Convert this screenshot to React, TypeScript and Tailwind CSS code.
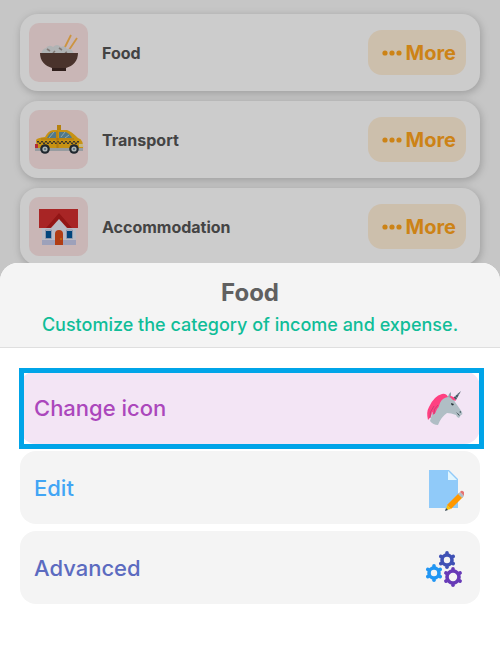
import type { ReactNode } from "react";

function RiceIcon() {
  return (
    <svg viewBox="0 0 48 48" className="size-12" aria-hidden="true">
      <path d="M29 20 36 6M34 21 42 9" stroke="#ffb951" strokeWidth="1.8" />
      <path d="M6 25q1-5 5-6 3-4 7-1 4-4 8 0 4-2 6 2 5-1 7 5Z" fill="#dce0e2" />
      <path d="m12 20 3 2m3 2 2-2m4-3 3 2m3 3 2-1" stroke="#a19792" strokeWidth="1.6" />
      <path d="M5 24h38c0 8-5 13-12 15H17C10 37 5 32 5 24Z" fill="#5d4037" />
      <path d="M17 39h14v3H17Z" fill="#3e2723" />
    </svg>
  );
}

function TaxiIcon() {
  const checks = Array.from({ length: 21 }, (_, i) => i);
  return (
    <svg viewBox="0 0 52 40" className="h-10 w-[52px]" aria-hidden="true">
      <path d="M24 5h4v6h-4Z" fill="#e4a212" />
      <path d="M3 20q1-2 9-3 3-6 8-7h14q4 1 11 8 6 1 5 13H4Z" fill="#f9b719" />
      <path d="M14 18q3-6 6-6h3v6ZM26 12h7q5 3 6 6H26Z" fill="#6598ac" />
      <path d="m16 18 5-6m7 5 4-5m0 6 4-3" stroke="#b5d1d8" />
      <path d="M2 28h48v3H2Z" fill="#bec4c8" />
      <path d="M2 24h3v4H2Z" fill="#df3546" />
      <path d="M46 24h4v3h-4Z" fill="#f5e6a4" />
      {checks.map((i) => (
        <path key={i} d={`M${4 + i * 2} ${i % 2 ? 22.5 : 21}h2v1.5h-2Z`} fill="#4a4437" />
      ))}
      <path d="M24 11v17m1-10v10M8 19h33" stroke="#d28b12" strokeWidth=".7" />
      {[12, 41].map((x) => (
        <g key={x}>
          <circle cx={x} cy="29" r="4.8" fill="#28313a" />
          <circle cx={x} cy="29" r="2.6" fill="#d7e0e2" />
          <circle cx={x} cy="29" r="1" fill="#668694" />
        </g>
      ))}
    </svg>
  );
}

function HouseIcon() {
  return (
    <svg viewBox="0 0 48 48" className="size-12" aria-hidden="true">
      <path d="M7 22h34v20H7Z" fill="#e8eaf6" />
      <path d="M7 37h34v5H7Z" fill="#c5cae9" />
      <path d="M4 6h39v19H4Z" fill="#d32f2f" />
      <path d="m24 10 13 15h-4l-9-8-9 8h-4Z" fill="#b71c1c" />
      <path d="m24 16 8 9v12H16V25Z" fill="#e8eaf6" />
      <path d="M20 42V31q0-4 4-4t4 4v11Z" fill="#dc4d19" />
      <path d="M11 28h5v7h-5Zm21 0h5v7h-5Z" fill="#01579b" />
      <path d="M10.500 27h6v8.500h-6Zm21 0h6v8.500h-6Z" fill="none" stroke="#b2bdd7" />
      <circle cx="26" cy="36" r=".8" fill="#ffb300" />
    </svg>
  );
}

function UnicornIcon() {
  return (
    <svg viewBox="0 0 40 40" className="size-10" aria-hidden="true">
      <path d="m29 9 8-7-5 9Z" fill="#455a64" />
      <path d="m31 7 2 2m0-4 2 1" stroke="#90a4ae" strokeWidth=".7" />
      <path d="M18 9q4-3 8-1 4 1 5 5l7 10q1 3-1 3l-2 3q-2 0-3-3-5-2-9-2-6 4-9 12-5 0-8-4L10 18Z" fill="#b0bec5" />
      <path d="M24 8q0-3 3-5v6Z" fill="#90a4ae" />
      <path d="M26 7q4 0 6 5-4-1-6-4ZM24 8q-6 1-8 6-1 4-3 6-1 4-4 6 0-3-1-3 0 4-4 8-2-8 1-13Q10 7 18 5q4-1 6 3Z" fill="#ff4081" />
      <path d="M6 29q-1-6 4-12m0 8q-1-5 4-9" fill="none" stroke="#c93f75" />
      <path d="m27 14 3 1-1 1.500q-2 0-2-2.500m5 9q3 2 4 4-2-1-4-4Z" fill="#263238" />
      <path d="M36 22q1 1 0 2" fill="none" stroke="#455a64" />
    </svg>
  );
}

function EditIcon() {
  return (
    <svg viewBox="0 0 40 44" className="h-11 w-10" aria-hidden="true">
      <path d="M5 3h20l9 9v29H5Z" fill="#90caf9" />
      <path d="M24 4v9h9Z" fill="#e1f5fe" />
      <path d="m23 38 12-12 4 4-12 12Z" fill="#ff9800" />
      <path d="m34 27 2-2 4 4-2 2Z" fill="#b0bec5" />
      <path d="m36 25 1-1q1-1 3 1t1 3l-1 1Z" fill="#e57373" />
      <path d="m23 38 4 4-5 1Z" fill="#ffc107" />
      <path d="m22 41 2 2-3 1Z" fill="#37474f" />
    </svg>
  );
}

function Gear({ x, y, r, color }: { x: number; y: number; r: number; color: string }) {
  return (
    <g transform={`translate(${x} ${y})`} stroke={color} fill="none">
      <circle r={r} strokeWidth="3.600" />
      {[0, 60, 120, 180, 240, 300].map((a) => (
        <path key={a} d={`M0 ${-r - 1.6}V${-r - 2.2}`} strokeWidth="3.600" strokeLinecap="round" transform={`rotate(${a})`} />
      ))}
    </g>
  );
}

function GearsIcon() {
  return (
    <svg viewBox="0 0 40 40" className="size-10" aria-hidden="true">
      <Gear x={23} y={11} r={5} color="#3f51b5" />
      <Gear x={10} y={24} r={5} color="#2196f3" />
      <Gear x={29} y={28} r={6} color="#673ab7" />
    </svg>
  );
}

function CategoryCard({ name, icon }: { name: string; icon: ReactNode }) {
  return (
    <li className="flex h-[77px] items-center rounded-[18px] bg-white pr-3.5 pl-[9px] shadow-[1px_2px_8px_rgba(0,0,0,0.22)]">
      <span className="flex size-[59px] items-center justify-center rounded-[10px] bg-[#fce4e4]">{icon}</span>
      <span className="ml-3.5 flex-1 text-base font-bold text-[#555]">{name}</span>
      <button type="button" aria-label={`More options for ${name}`} className="flex h-[45px] items-center gap-1 rounded-[14px] bg-[#ffefd8] pr-2.5 pl-3.5 text-xl font-bold text-[#ffa41c]">
        <svg viewBox="0 0 20 6" className="h-1.5 w-5" fill="currentColor" aria-hidden="true">
          <circle cx="3" cy="3" r="2.600" /><circle cx="10" cy="3" r="2.600" /><circle cx="17" cy="3" r="2.600" />
        </svg>
        More
      </button>
    </li>
  );
}

function Action({ label, icon, tone, selected = false }: { label: string; icon: ReactNode; tone: string; selected?: boolean }) {
  return (
    <li className="relative">
      <button type="button" className={`flex h-[73px] w-full items-center justify-between rounded-2xl pt-0.5 pr-4 pl-3.5 text-[22px] font-medium ${tone}`}>
        {label}
        {icon}
      </button>
      {selected && <span className="pointer-events-none absolute -top-[3px] -right-1 -bottom-[5px] -left-px border-5 border-[#00a4e8]" />}
    </li>
  );
}

export default function App() {
  return (
    <div className="relative min-h-screen overflow-hidden bg-[#f8f8f8] font-['Inter',sans-serif]">
      <ul className="flex flex-col gap-2.5 px-5 pt-3.5">
        <CategoryCard name="Food" icon={<RiceIcon />} />
        <CategoryCard name="Transport" icon={<TaxiIcon />} />
        <CategoryCard name="Accommodation" icon={<HouseIcon />} />
      </ul>
      <div className="absolute inset-0 bg-black/20" />
      <section role="dialog" aria-labelledby="sheet-title" className="absolute inset-x-0 bottom-0 overflow-hidden rounded-t-[18px] bg-white">
        <header className="border-b border-[#dfdfdf] bg-[#f4f4f4] pt-3 pb-2.5 text-center">
          <h1 id="sheet-title" className="text-2xl leading-9 font-bold text-[#606060]">Food</h1>
          <p className="mt-0.5 text-lg leading-6 font-medium text-[#10bd98]">Customize the category of income and expense.</p>
        </header>
        <ul className="flex flex-col gap-[7px] px-5 pt-[23px] pb-[41px]">
          <Action label="Change icon" icon={<UnicornIcon />} tone="bg-[#f3e5f5] text-[#ab47bc]" selected />
          <Action label="Edit" icon={<EditIcon />} tone="bg-[#f4f4f4] text-[#42a5f5]" />
          <Action label="Advanced" icon={<GearsIcon />} tone="bg-[#f4f4f4] text-[#5c6bc0]" />
        </ul>
      </section>
    </div>
  );
}
